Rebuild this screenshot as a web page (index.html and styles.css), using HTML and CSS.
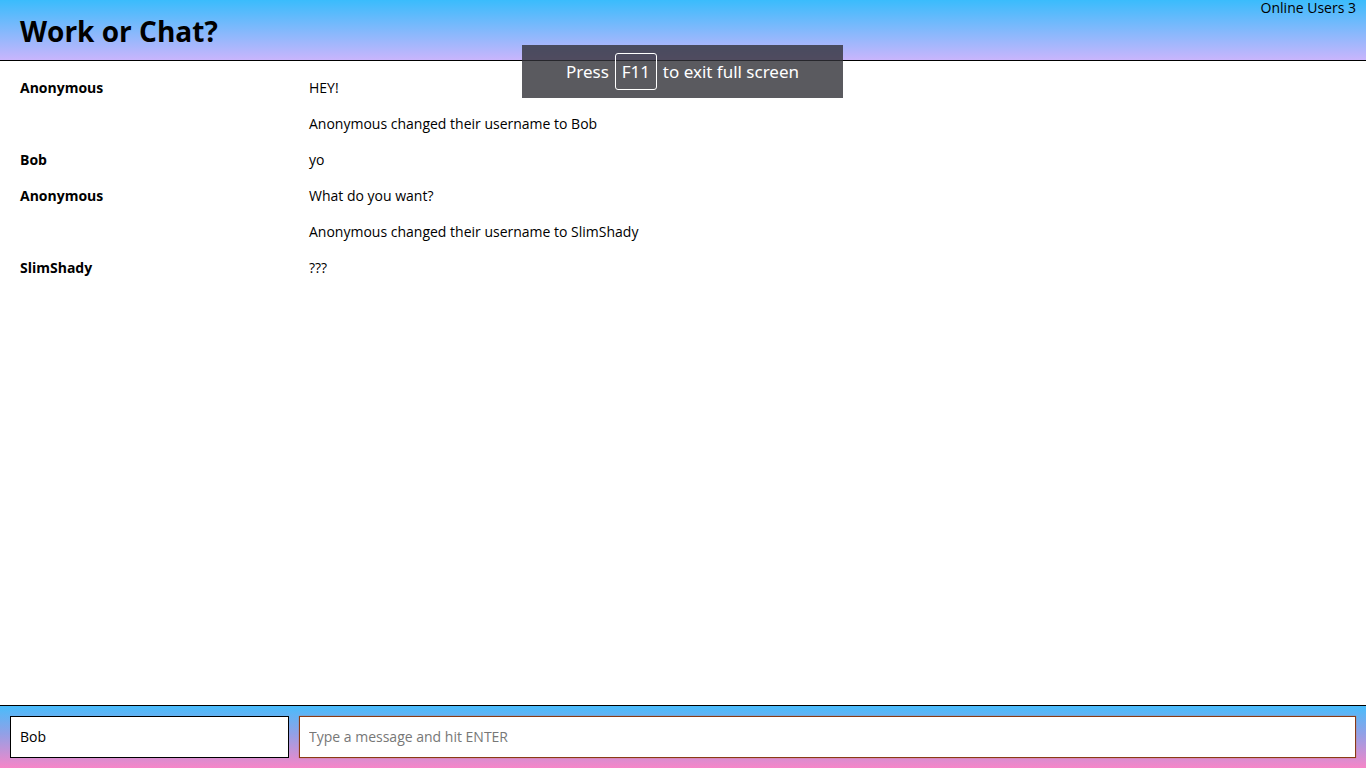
FILE: index.html
```html
<!DOCTYPE html>
<html>
<head>
<meta charset="utf-8">
<title>Work or Chat?</title>
<link rel="stylesheet" href="styles.css">
</head>
<body>
<div class="app">
  <header class="header">
    <h1 class="title">Work or Chat?</h1>
    <div class="online">Online Users 3</div>
  </header>
  <main class="messages">
    <div class="row"><div class="name">Anonymous</div><div class="text">HEY!</div></div>
    <div class="row"><div class="name"></div><div class="text">Anonymous changed their username to Bob</div></div>
    <div class="row"><div class="name">Bob</div><div class="text">yo</div></div>
    <div class="row"><div class="name">Anonymous</div><div class="text">What do you want?</div></div>
    <div class="row"><div class="name"></div><div class="text">Anonymous changed their username to SlimShady</div></div>
    <div class="row"><div class="name">SlimShady</div><div class="text">???</div></div>
  </main>
  <footer class="footer">
    <input class="name-input" type="text" value="Bob">
    <input class="msg-input" type="text" placeholder="Type a message and hit ENTER">
  </footer>
</div>
<div class="fs-toast">Press <span class="key">F11</span> to exit full screen</div>
</body>
</html>
```
FILE: styles.css
```css
* { box-sizing: border-box; }
html, body { margin: 0; padding: 0; height: 100%; }
body {
  font-family: "Open Sans", "Noto Sans", sans-serif;
  color: #000;
  background: #fff;
}
.app {
  display: flex;
  flex-direction: column;
  height: 100vh;
}
.header {
  position: relative;
  height: 61px;
  flex: none;
  background: linear-gradient(to bottom, #3abcfc, #c9b5fc);
  border-bottom: 1px solid #000;
  display: flex;
  align-items: center;
  padding: 0 20px;
}
.title {
  margin: 0;
  font-size: 28px;
  font-weight: 700;
  line-height: 1;
  padding-top: 2px;
}
.online {
  position: absolute;
  top: -1px;
  right: 10px;
  font-size: 14px;
  line-height: 18px;
}
.messages {
  flex: 1;
  padding-top: 9px;
  overflow: auto;
}
.row {
  display: flex;
  padding: 8px 20px;
  font-size: 14px;
  line-height: 20px;
}
.name {
  width: 289px;
  flex: none;
  font-weight: 700;
}
.text { flex: 1; }
.footer {
  flex: none;
  height: 63px;
  border-top: 1px solid #000;
  background: linear-gradient(to bottom, #49bcfb, #92a0e6 45%, #f686c8);
  display: flex;
  gap: 10px;
  padding: 10px;
}
.footer input {
  height: 42px;
  font-family: "Open Sans", "Noto Sans", sans-serif;
  font-size: 14px;
  padding: 0 9px 2px;
  background: #fff;
  color: #000;
  outline: none;
  margin: 0;
}
.name-input {
  width: 279px;
  border: 1px solid #000;
}
.msg-input {
  flex: 1;
  border: 1px solid #8a3a14;
  box-shadow: 0 0 1px #c06a40;
}
.msg-input::placeholder { color: #777; }
.fs-toast {
  position: absolute;
  left: 522px;
  top: 45px;
  width: 321px;
  height: 53px;
  background: rgba(49, 49, 55, 0.8);
  color: #fff;
  font-family: "Noto Sans", "DejaVu Sans", sans-serif;
  font-size: 17px;
  display: flex;
  align-items: center;
  justify-content: center;
  gap: 6px;
}
.key {
  display: inline-flex;
  align-items: center;
  justify-content: center;
  width: 42px;
  height: 37px;
  border: 1px solid #fff;
  border-radius: 3px;
}
```
